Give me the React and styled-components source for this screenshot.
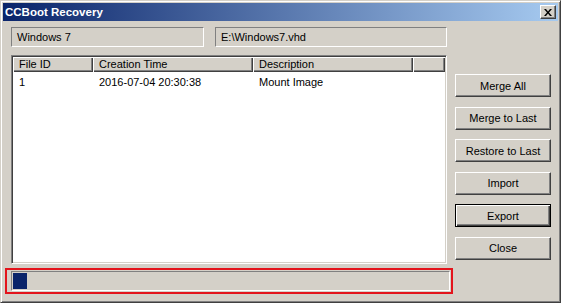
import styled, { createGlobalStyle, css } from 'styled-components';

const Global = createGlobalStyle`
  html, body {
    margin: 0;
    padding: 0;
    background: #d4d0c8;
  }
  * {
    box-sizing: border-box;
  }
`;

const Window = styled.div`
  width: 561px;
  height: 303px;
  display: flex;
  flex-direction: column;
  background: #d4d0c8;
  border: 1px solid;
  border-color: #d4d0c8 #404040 #404040 #d4d0c8;
  box-shadow: inset 1px 1px #fff, inset -1px -1px #808080;
  padding: 2px;
  font-family: "Liberation Sans", Arial, sans-serif;
  font-size: 11px;
  color: #000;
`;

const TitleBar = styled.div`
  height: 18px;
  display: flex;
  align-items: center;
  justify-content: space-between;
  padding: 0 2px 0 2px;
  background: linear-gradient(to right, #0a246a, #a6caf0);
`;

const Title = styled.span`
  color: #fff;
  font-weight: bold;
  font-size: 11.5px;
  letter-spacing: 0;
`;

const CloseBox = styled.div`
  width: 16px;
  height: 14px;
  display: flex;
  align-items: center;
  justify-content: center;
  background: #d4d0c8;
  border: 1px solid;
  border-color: #fff #404040 #404040 #fff;
  box-shadow: inset -1px -1px #808080;
`;

const Body = styled.div`
  display: flex;
  gap: 8px;
  padding: 6px 0 0 8px;
`;

const LeftCol = styled.div`
  width: 436px;
  display: flex;
  flex-direction: column;
  gap: 8px;
`;

const FieldsRow = styled.div`
  display: flex;
  gap: 11px;
  height: 20px;
`;

const Field = styled.div`
  width: ${p => p.$w}px;
  flex: ${p => (p.$w ? 'none' : '1')};
  display: flex;
  align-items: center;
  padding-left: 5px;
  border: 1px solid;
  border-color: #808080 #fff #fff #808080;
`;

const List = styled.div`
  height: 209px;
  background: #fff;
  border: 1px solid;
  border-color: #808080 #fff #fff #808080;
  box-shadow: inset 1px 1px #404040, inset -1px -1px #d4d0c8;
  padding: 1px;
`;

const Header = styled.div`
  display: flex;
  height: 15px;
  background: #d4d0c8;
`;

const cols = [80, 160, 160];

const HeaderCell = styled.div`
  width: ${p => (p.$w ? `${p.$w}px` : 'auto')};
  flex: ${p => (p.$w ? 'none' : '1')};
  padding-left: 6px;
  line-height: 14px;
  box-shadow: inset 1px 1px #fff, inset -1px -1px #404040, inset -2px -2px #808080;
`;

const Row = styled.div`
  display: flex;
  height: 17px;
  padding-top: 3px;
`;

const Cell = styled.div`
  width: ${p => p.$w}px;
  padding-left: 6px;
  line-height: 14px;
`;

const ButtonCol = styled.div`
  width: 96px;
  display: flex;
  flex-direction: column;
  gap: 9.6px;
  padding-top: 47px;
`;

const Button = styled.div`
  height: 23px;
  display: flex;
  align-items: center;
  justify-content: center;
  border: 1px solid;
  border-color: #fff #404040 #404040 #fff;
  box-shadow: inset -1px -1px #808080;
  ${p =>
    p.$default &&
    css`
      border-color: #000;
      box-shadow: inset 1px 1px #fff, inset -1px -1px #404040, inset -2px -2px #808080;
    `}
`;

const ProgressRow = styled.div`
  padding: 4px 0 0 2px;
`;

const Highlight = styled.div`
  width: 448px;
  border: 2px solid #e3141c;
  padding: 1px 1px 1px 4px;
`;

const Bar = styled.div`
  height: 20px;
  border: 1px solid;
  border-color: #808080 #fff #fff #808080;
  padding: 1px;
`;

const Chunk = styled.div`
  width: 14px;
  height: 16px;
  background: #0a246a;
`;

const buttons = ['Merge All', 'Merge to Last', 'Restore to Last', 'Import', 'Export', 'Close'];

export default function App() {
  return (
    <>
      <Global />
      <Window>
        <TitleBar>
          <Title>CCBoot Recovery</Title>
          <CloseBox>
            <svg width="8" height="7" viewBox="0 0 8 7">
              <path d="M0 0 L2 0 L4 2.5 L6 0 L8 0 L5 3.5 L8 7 L6 7 L4 4.5 L2 7 L0 7 L3 3.5 Z" fill="#000" />
            </svg>
          </CloseBox>
        </TitleBar>
        <Body>
          <LeftCol>
            <FieldsRow>
              <Field $w={193}>Windows 7</Field>
              <Field>E:\Windows7.vhd</Field>
            </FieldsRow>
            <List>
              <Header>
                <HeaderCell $w={cols[0]}>File ID</HeaderCell>
                <HeaderCell $w={cols[1]}>Creation Time</HeaderCell>
                <HeaderCell $w={cols[2]}>Description</HeaderCell>
                <HeaderCell />
              </Header>
              <Row>
                <Cell $w={cols[0]}>1</Cell>
                <Cell $w={cols[1]}>2016-07-04 20:30:38</Cell>
                <Cell $w={cols[2]}>Mount Image</Cell>
              </Row>
            </List>
          </LeftCol>
          <ButtonCol>
            {buttons.map(b => (
              <Button key={b} $default={b === 'Export'}>
                {b}
              </Button>
            ))}
          </ButtonCol>
        </Body>
        <ProgressRow>
          <Highlight>
            <Bar>
              <Chunk />
            </Bar>
          </Highlight>
        </ProgressRow>
      </Window>
    </>
  );
}
